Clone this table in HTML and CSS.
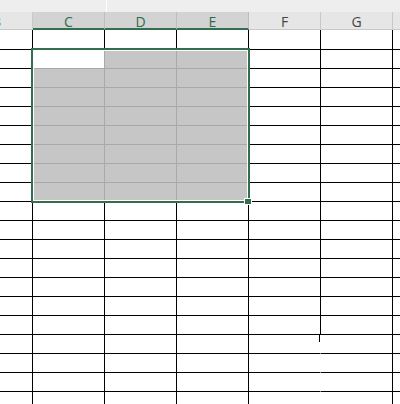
FILE: index.html
```html
<!DOCTYPE html>
<html>
<head>
<meta charset="utf-8">
<link rel="stylesheet" href="styles.css">
</head>
<body>
<div class="sheet">
  <div class="topbar"><span class="tick"></span></div>
  <div class="hdr">
    <div class="hc">B</div>
    <div class="hc sel">C</div>
    <div class="hc sel">D</div>
    <div class="hc sel">E</div>
    <div class="hc">F</div>
    <div class="hc">G</div>
    <div class="hc"></div>
  </div>
  <div class="grid" id="grid"></div>
  <div class="selection">
    <div class="selgrid">
      <div class="sc active"></div><div class="sc"></div><div class="sc"></div>
      <div class="sc"></div><div class="sc"></div><div class="sc"></div>
      <div class="sc"></div><div class="sc"></div><div class="sc"></div>
      <div class="sc"></div><div class="sc"></div><div class="sc"></div>
      <div class="sc"></div><div class="sc"></div><div class="sc"></div>
      <div class="sc"></div><div class="sc"></div><div class="sc"></div>
      <div class="sc"></div><div class="sc"></div><div class="sc"></div>
      <div class="sc"></div><div class="sc"></div><div class="sc"></div>
    </div>
  </div>
  <div class="handle"></div>
</div>
<script>
  var g = document.getElementById('grid');
  var html = '';
  for (var r = 0; r < 20; r++) {
    for (var c = 0; c < 7; c++) {
      var cls = 'cell';
      if (c === 4 && r >= 16) cls += ' merged';
      if (c === 4 && r === 16) cls += ' stub';
      html += '<div class="' + cls + '"></div>';
    }
  }
  g.innerHTML = html;
</script>
</body>
</html>
```

FILE: styles.css
```css
html, body {
  margin: 0;
  padding: 0;
  background: #ffffff;
  overflow: hidden;
}

.sheet {
  position: relative;
  width: 400px;
  height: 404px;
  overflow: hidden;
  font-family: "Open Sans", "Noto Sans", "Liberation Sans", sans-serif;
}

.topbar {
  height: 12px;
  background: #eeeeee;
  display: flex;
}

.tick {
  margin-left: 106px;
  width: 1px;
  height: 12px;
  background: #fbfbfb;
}

.hdr {
  display: grid;
  grid-template-columns: repeat(7, 72px);
  height: 18px;
  margin-left: -39px;
}

.hc {
  box-sizing: border-box;
  height: 18px;
  background: #e6e6e6;
  border-right: 1px solid #c9c9c9;
  border-bottom: 1px solid #c8c8c8;
  font-size: 14px;
  line-height: 18px;
  text-align: center;
  color: #444444;
  padding-top: 1px;
}

.hc.sel {
  background: #d3d3d3;
  border-right-color: #bdbdbd;
  border-bottom: 2px solid #336f4e;
  color: #2f6a4e;
  line-height: 17px;
}

.grid {
  display: grid;
  grid-template-columns: repeat(7, 72px);
  grid-template-rows: 20px;
  grid-auto-rows: 19px;
  margin-left: -39px;
}

.cell {
  box-sizing: border-box;
  border-right: 1px solid #000000;
  border-bottom: 1px solid #000000;
}

.cell.merged {
  border-right-color: transparent;
}

.cell.stub {
  background: linear-gradient(#000000, #000000) right top / 1px 7px no-repeat;
}

.selection {
  position: absolute;
  left: 31px;
  top: 48px;
  width: 219px;
  height: 155px;
  box-sizing: border-box;
  border: 2px solid #336f4e;
  padding: 1px;
  background: #ffffff;
}

.selgrid {
  display: grid;
  grid-template-columns: 70px 71px 70px;
  grid-template-rows: 17px repeat(6, 18px) 17px;
  gap: 1px;
  background: #a9a9a9;
  height: 100%;
}

.sc {
  background: #c6c6c6;
}

.sc.active {
  background: #ffffff;
}

.handle {
  position: absolute;
  left: 244px;
  top: 198px;
  width: 8px;
  height: 7px;
  box-sizing: border-box;
  background: #336f4e;
  border: 1px solid #ffffff;
}
```
